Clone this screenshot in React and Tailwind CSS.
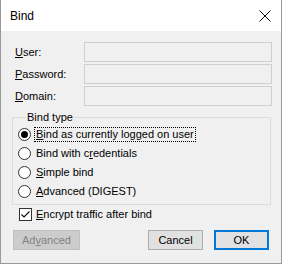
const font = { fontFamily: '"Liberation Sans", Arial, sans-serif' };

const Radio = ({ checked, children, focused }) => (
  <label className="flex items-center h-[19px] gap-[3px]">
    <span className="w-[13px] h-[13px] rounded-full border border-[#333] bg-white flex items-center justify-center">
      {checked && <span className="w-[7px] h-[7px] rounded-full bg-black" />}
    </span>
    <span
      className={
        focused
          ? 'border border-dotted border-black px-[1px] leading-[13px]'
          : 'border border-transparent px-[1px] leading-[13px]'
      }
    >
      {children}
    </span>
  </label>
);

const Field = ({ label }) => (
  <div className="flex items-center h-[20px]">
    <span className="w-[69px]">{label}</span>
    <div className="w-[188px] h-[20px] border border-[#cfcfcf] bg-[#f0f0f0]" />
  </div>
);

export default function App() {
  return (
    <div
      className="w-[282px] h-[264px] bg-[#f0f0f0] border-l border-r border-b border-[#9a9a9a] text-[11px] text-black flex flex-col"
      style={font}
    >
      {/* title bar */}
      <div className="h-[31px] bg-white flex items-center justify-between pl-[9px] pr-[9px]">
        <span className="text-[12px]">Bind</span>
        <svg width="14" height="14" viewBox="0 0 14 14">
          <path d="M1.5 1.5 L12.5 12.5 M12.5 1.5 L1.5 12.5" stroke="#111" strokeWidth="1" fill="none" />
        </svg>
      </div>

      <div className="flex flex-col pl-[14px] pt-[11px] gap-[2px]">
        <Field label={<><u>U</u>ser:</>} />
        <Field label={<><u>P</u>assword:</>} />
        <Field label={<><u>D</u>omain:</>} />
      </div>

      <fieldset className="ml-[11px] mr-[10px] mt-[5px] border border-[#dcdcdc] pl-[5px] pt-[1px] pb-[3px]">
        <legend className="ml-[8px] px-[1px] leading-[13px]">Bind type</legend>
        <Radio checked focused>
          <u>B</u>ind as currently logged on user
        </Radio>
        <Radio>
          Bind with c<u>r</u>edentials
        </Radio>
        <Radio>
          <u>S</u>imple bind
        </Radio>
        <Radio>
          <u>A</u>dvanced (DIGEST)
        </Radio>
      </fieldset>

      <label className="flex items-center gap-[3px] ml-[18px] mt-[3px] h-[13px]">
        <span className="w-[13px] h-[13px] border border-[#333] bg-white flex items-center justify-center">
          <svg width="11" height="11" viewBox="0 0 11 11">
            <path d="M1.5 5.5 L4 8 L9.5 2.5" stroke="#111" strokeWidth="1.2" fill="none" />
          </svg>
        </span>
        <span className="px-[1px]">
          <u>E</u>ncrypt traffic after bind
        </span>
      </label>

      <div className="flex items-center mt-[9px] pl-[12px] pr-[12px]">
        <button className="w-[67px] h-[20px] bg-[#cccccc] border border-[#bfbfbf] text-[#838383]">
          Ad<u>v</u>anced
        </button>
        <div className="flex-1" />
        <button className="w-[55px] h-[20px] bg-[#e1e1e1] border border-[#adadad]">Cancel</button>
        <button className="w-[55px] h-[20px] ml-[11px] bg-[#e1e1e1] border-2 border-[#0078d7]">OK</button>
      </div>
    </div>
  );
}
